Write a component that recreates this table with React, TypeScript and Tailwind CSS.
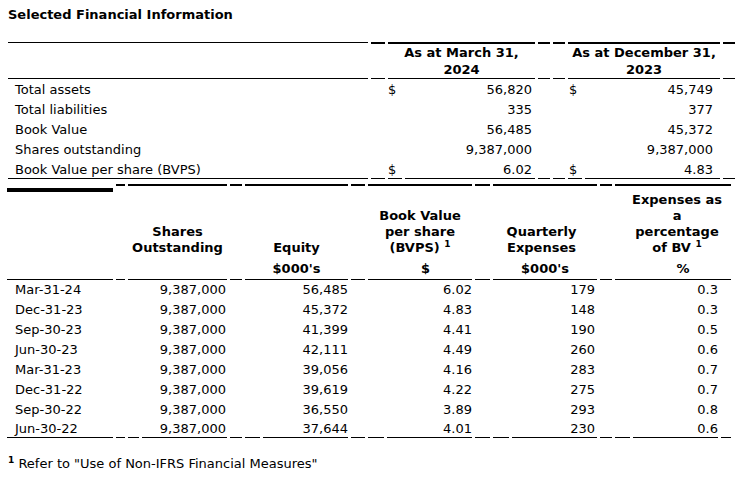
import React from 'react';

const topRows = [
  ['Total assets', '$', '56,820', '$', '45,749'],
  ['Total liabilities', '', '335', '', '377'],
  ['Book Value', '', '56,485', '', '45,372'],
  ['Shares outstanding', '', '9,387,000', '', '9,387,000'],
  ['Book Value per share (BVPS)', '$', '6.02', '$', '4.83'],
];

const quarters = [
  ['Mar-31-24', '9,387,000', '56,485', '6.02', '179', '0.3'],
  ['Dec-31-23', '9,387,000', '45,372', '4.83', '148', '0.3'],
  ['Sep-30-23', '9,387,000', '41,399', '4.41', '190', '0.5'],
  ['Jun-30-23', '9,387,000', '42,111', '4.49', '260', '0.6'],
  ['Mar-31-23', '9,387,000', '39,056', '4.16', '283', '0.7'],
  ['Dec-31-22', '9,387,000', '39,619', '4.22', '275', '0.7'],
  ['Sep-30-22', '9,387,000', '36,550', '3.89', '293', '0.8'],
  ['Jun-30-22', '9,387,000', '37,644', '4.01', '230', '0.6'],
];

// right padding of each value column in the quarterly table
const valPad = ['pr-[1px]', 'pr-0', 'pr-0', 'pr-[2px]', 'pr-0'];

function Sup() {
  return <span className="text-[9px] font-bold leading-none align-[5px]">1</span>;
}

export default function App() {
  return (
    <div className="w-[741px] h-[478px] bg-white text-black text-[13px] font-['DejaVu_Sans',sans-serif] pt-[5px]">
      <h1 className="pl-2 font-bold leading-[20px]">Selected Financial Information</h1>

      {/* Tableau du haut */}
      <table className="mt-[17px] ml-[5px] w-[733px] table-fixed border-separate border-spacing-x-[3px] border-spacing-y-0">
        <colgroup>
          <col className="w-[360px]" />
          <col className="w-[14px]" />
          <col className="w-[14px]" />
          <col className="w-[130px]" />
          <col className="w-[12px]" />
          <col className="w-[12px]" />
          <col className="w-[14px]" />
          <col className="w-[135px]" />
          <col className="w-[12px]" />
        </colgroup>
        <thead>
          <tr className="font-bold leading-[17px]">
            <th className="border-t border-b border-black" />
            <th className="border-t-2 border-b border-black" />
            <th colSpan={2} className="border-t-2 border-b border-black text-center font-bold">
              As at March 31,
              <br />
              2024
            </th>
            <th className="border-t-2 border-b border-black" />
            <th className="border-t-2 border-b border-black" />
            <th colSpan={2} className="border-t-2 border-b border-black text-center font-bold">
              As at December 31,
              <br />
              2023
            </th>
            <th className="border-t-2 border-b border-black" />
          </tr>
        </thead>
        <tbody>
          {topRows.map((r, i) => {
            const last = i === topRows.length - 1;
            const cell = last ? 'border-b border-black leading-[17px] pt-px' : 'leading-[20px]';
            return (
              <tr key={r[0]} className={i === 0 ? '[&>td]:pt-px' : ''}>
                <td className={`${cell} pl-[7px] whitespace-nowrap`}>{r[0]}</td>
                <td className={cell} />
                <td className={`${cell} text-left`}>{r[1]}</td>
                <td className={`${cell} text-right pr-[3px]`}>{r[2]}</td>
                <td className={cell} />
                <td className={cell} />
                <td className={`${cell} text-left pl-px`}>{r[3]}</td>
                <td className={`${cell} text-right pr-[7px]`}>{r[4]}</td>
                <td className={cell} />
              </tr>
            );
          })}
        </tbody>
      </table>

      {/* Tableau trimestriel */}
      <table className="mt-[5px] ml-[4px] w-[730px] table-fixed border-separate border-spacing-x-[3px] border-spacing-y-0">
        <colgroup>
          <col className="w-[106px]" />
          <col className="w-[9px]" />
          <col className="w-[11px]" />
          <col className="w-[85px]" />
          <col className="w-[12px]" />
          <col className="w-[15px]" />
          <col className="w-[85px]" />
          <col className="w-[14px]" />
          <col className="w-[16px]" />
          <col className="w-[85px]" />
          <col className="w-[15px]" />
          <col className="w-[16px]" />
          <col className="w-[85px]" />
          <col className="w-[12px]" />
          <col className="w-[15px]" />
          <col className="w-[85px]" />
          <col className="w-[10px]" />
        </colgroup>
        <thead>
          <tr className="font-bold leading-[16px] [&>th]:align-bottom [&>th]:pb-[3px] [&>th]:pt-[6px] [&>th]:font-bold">
            <th className="!align-top !p-0">
              <div className="mt-[4px] h-[4px] bg-black" />
            </th>
            <th className="border-t-2 border-black" />
            <th colSpan={2} className="border-t-2 border-black text-center">
              Shares
              <br />
              Outstanding
            </th>
            <th className="border-t-2 border-black" />
            <th colSpan={2} className="border-t-2 border-black text-center">
              Equity
            </th>
            <th className="border-t-2 border-black" />
            <th colSpan={2} className="border-t-2 border-black text-center">
              Book Value
              <br />
              per share
              <br />
              (BVPS) <Sup />
            </th>
            <th className="border-t-2 border-black" />
            <th colSpan={2} className="border-t-2 border-black text-center pr-[7px]">
              Quarterly
              <br />
              Expenses
            </th>
            <th className="border-t-2 border-black" />
            <th colSpan={3} className="border-t-2 border-black text-center pl-[8px]">
              Expenses as
              <br />
              a
              <br />
              percentage
              <br />
              of BV <Sup />
            </th>
          </tr>
          <tr className="font-bold leading-[20px] [&>th]:border-b [&>th]:border-black [&>th]:font-bold">
            <th />
            <th />
            <th colSpan={2} />
            <th />
            <th colSpan={2} className="text-center">
              $000's
            </th>
            <th />
            <th colSpan={2} className="text-center pl-[11px]">
              $
            </th>
            <th />
            <th colSpan={2} className="text-center">
              $000's
            </th>
            <th />
            <th colSpan={3} className="text-center pl-[20px]">
              %
            </th>
          </tr>
        </thead>
        <tbody>
          {quarters.map((q, i) => {
            const last = i === quarters.length - 1;
            const cell = last ? 'border-b border-black leading-[17px]' : 'leading-[20px]';
            return (
              <tr key={q[0]}>
                <td className={`${cell} pl-[8px] whitespace-nowrap`}>{q[0]}</td>
                {q.slice(1).map((v, j) => (
                  <React.Fragment key={j}>
                    <td className={cell} />
                    <td className={cell} />
                    <td className={`${cell} text-right ${valPad[j]}`}>{v}</td>
                  </React.Fragment>
                ))}
                <td className={cell} />
              </tr>
            );
          })}
        </tbody>
      </table>

      <p className="mt-[16px] pl-2 leading-[20px]">
        <span className="text-[9px] font-bold leading-none align-[5px]">1</span> Refer to "Use of Non-IFRS
        Financial Measures"
      </p>
    </div>
  );
}
